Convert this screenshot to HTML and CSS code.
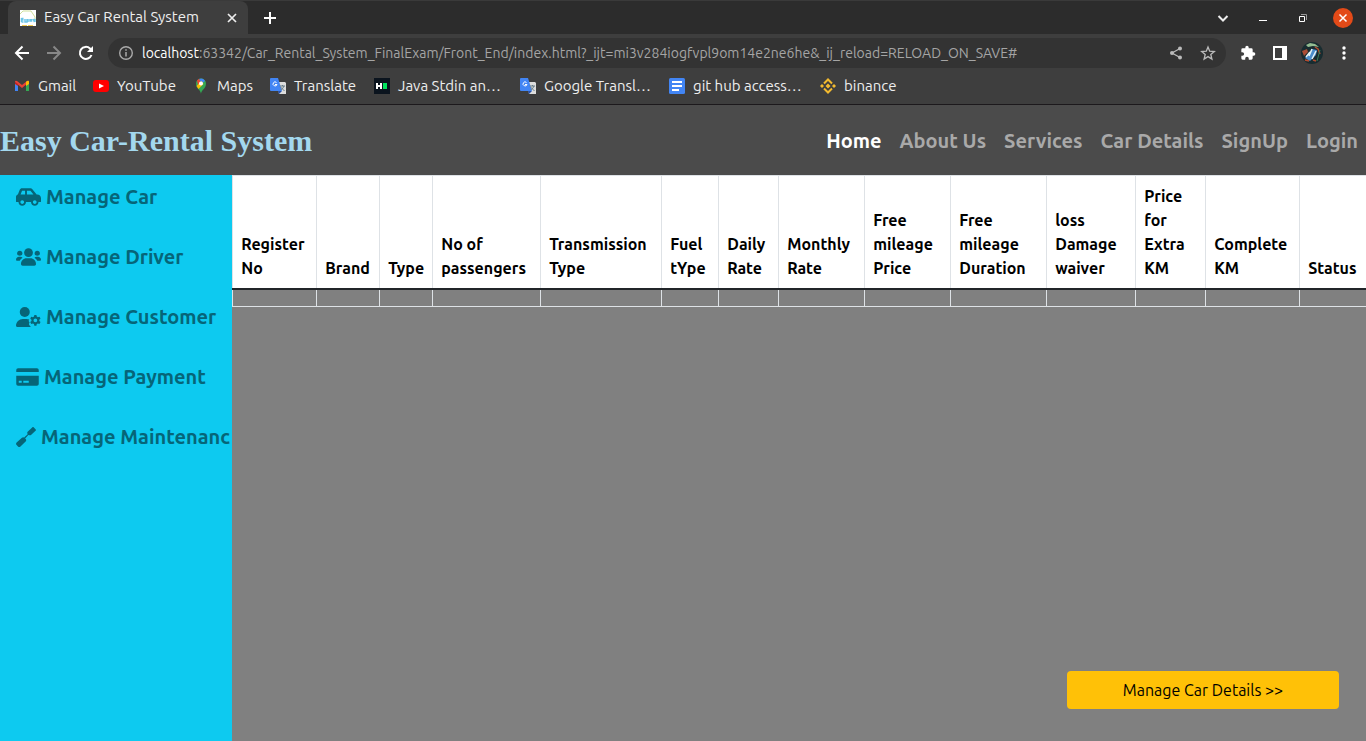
FILE: index.html
```html
<!DOCTYPE html>
<html lang="en">
<head>
<meta charset="utf-8">
<title>Easy Car Rental System</title>
<link rel="stylesheet" href="styles.css">
</head>
<body>
<div class="browser">
  <div class="tab-strip">
    <div class="tab">
      <svg class="icon-16" viewBox="0 0 16 16"><path fill="#fff" d="M0 0h16v16H0z"/><path d="M0 4 3 1h8l4 6v3" fill="none" stroke="#cfdf9a"/><path d="M1.500 8v4M1.500 8.500h2m-2 1.500h2m-2 2h2M5 9v3h2V9m1 0v3M10 9v2h1.500V9M13 9l1 2 1-2v3" stroke="#6cc4e6" stroke-width="1.500" fill="none"/><path d="M2 15.500h12" stroke="#f3cb4e" stroke-dasharray="5 1"/></svg>
      <span class="tab-title">Easy Car Rental System</span>
      <button class="icon-button" aria-label="Close tab"><svg class="icon-16" viewBox="0 0 16 16"><path d="m4 4 8 8m0-8-8 8" stroke="#eee" stroke-width="1.7"/></svg></button>
    </div>
    <button class="icon-button new-tab" aria-label="New tab"><svg class="icon-16" viewBox="0 0 16 16"><path d="M8 2v12M2 8h12" stroke="#fff" stroke-width="2"/></svg></button>
    <div class="window-controls">
      <button class="icon-button" aria-label="Search tabs"><svg class="icon-16" viewBox="0 0 16 16"><path d="m3.500 6 4.500 4.500L12.500 6" stroke="#eee" stroke-width="2" fill="none"/></svg></button>
      <button class="icon-button" aria-label="Minimize"><svg class="icon-16" viewBox="0 0 16 16"><path d="M4 10.500h8" stroke="#fff"/></svg></button>
      <button class="icon-button" aria-label="Restore"><svg class="icon-16" viewBox="0 0 16 16"><path d="M6 4.500h5.500V10" stroke="#999" fill="none"/><path d="M4.500 6.500h5v5h-5z" stroke="#fff" fill="none"/></svg></button>
      <button class="icon-button close-window" aria-label="Close"><svg class="icon-16" viewBox="0 0 16 16"><path d="m4.500 4.500 7 7m0-7-7 7" stroke="#fff" stroke-width="1.500"/></svg></button>
    </div>
  </div>
  <div class="toolbar">
    <div class="history">
      <button class="icon-button" aria-label="Back"><svg class="icon-16" viewBox="0 0 16 16"><path d="M15 8H2m6.500-6.500L2 8l6.500 6.500" stroke="#fff" stroke-width="2" fill="none"/></svg></button>
      <button class="icon-button" aria-label="Forward"><svg class="icon-16" viewBox="0 0 16 16"><path d="M1 8h13M7.500 1.500 14 8l-6.500 6.500" stroke="#888" stroke-width="2" fill="none"/></svg></button>
      <button class="icon-button" aria-label="Reload"><svg class="icon-16" viewBox="0 0 16 16"><path d="M13.500 10A6 6 0 1 1 12 3.500L14 6" stroke="#fff" stroke-width="2" fill="none"/><path fill="#fff" d="M15 1v6H9z"/></svg></button>
    </div>
    <div class="address">
      <svg class="icon-16" viewBox="0 0 16 16"><circle cx="8" cy="8" r="6.300" fill="none" stroke="#aaa" stroke-width="1.400"/><path d="M8 7v4.500M8 4.200v1.600" stroke="#aaa" stroke-width="1.500"/></svg>
      <p class="url"><span class="host">localhost</span>:63342/Car_Rental_System_FinalExam/Front_End/index.html?_ijt=mi3v284iogfvpl9om14e2ne6he&amp;_ij_reload=RELOAD_ON_SAVE#</p>
      <button class="icon-button" aria-label="Share"><svg class="icon-16" viewBox="0 0 16 16"><path d="M12 3.500 4 8l8 4.500" stroke="#bbb" stroke-width="1.300" fill="none"/><g fill="#bbb"><circle cx="12" cy="3.500" r="2"/><circle cx="4" cy="8" r="2"/><circle cx="12" cy="12.500" r="2"/></g></svg></button>
      <button class="icon-button" aria-label="Bookmark"><svg class="icon-16" viewBox="0 0 16 16"><path d="m8 2 1.700 4.200 4.600.3-3.500 3 1.100 4.500L8 11.600 4.100 14l1.100-4.500-3.500-3 4.600-.3z" stroke="#bbb" stroke-width="1.300" fill="none"/></svg></button>
    </div>
    <div class="extensions">
      <button class="icon-button" aria-label="Extensions"><svg class="icon-16" viewBox="0 0 24 24"><path fill="#fff" d="M20.500 11H19V7a2 2 0 0 0-2-2h-4V3.500a2.500 2.500 0 0 0-5 0V5H4a2 2 0 0 0-2 2v3.800h1.500a2.700 2.700 0 0 1 0 5.400H2V20a2 2 0 0 0 2 2h3.800v-1.500a2.700 2.700 0 0 1 5.400 0V22H17a2 2 0 0 0 2-2v-4h1.500a2.500 2.500 0 0 0 0-5z"/></svg></button>
      <button class="icon-button" aria-label="Side panel"><svg class="icon-16" viewBox="0 0 16 16"><path fill="#fff" fill-rule="evenodd" d="M1 1h14v14H1zM3 3v10h7V3z"/></svg></button>
      <button class="icon-button" aria-label="Profile"><svg class="avatar" viewBox="0 0 22 22"><circle cx="11" cy="11" r="11" fill="#182c30"/><path d="m5 3 4-2 5 1 4 3-6-1-5 1z" fill="#94bd91"/><path d="m1 9 5-2 1 3-4 4z" fill="#a94d35"/><path d="m4 16 7-9 5 1-1 5-6 6z" fill="#4b8dcb"/><path d="m8 14 3-7M11 17l4-8M5 15l4-5" stroke="#e5f3f5" stroke-width="1.500"/><path d="m14 5 3 2 2 5m-15 6 4 1m4-1 3 1" stroke="#b64c2e" stroke-width="1.500" fill="none"/><path d="m19 8-3 11" stroke="#397b57"/></svg></button>
      <button class="icon-button" aria-label="Menu"><svg class="icon-16" viewBox="0 0 16 16"><g fill="#fff"><circle cx="8" cy="3" r="1.700"/><circle cx="8" cy="8" r="1.700"/><circle cx="8" cy="13" r="1.700"/></g></svg></button>
    </div>
  </div>
  <nav class="bookmarks" aria-label="Bookmarks">
    <a class="bookmark w-gmail" href="#"><svg class="icon-16" viewBox="0 0 16 16"><path fill="#4285f4" d="M1 4v9h3V7z"/><path fill="#34a853" d="M12 7v6h3V4z"/><path fill="#ea4335" d="M1 4q0-2 2-1l5 4 5-4q2-1 2 1l-7 6z"/><path fill="#fbbc04" d="m12 4 1-1q2-1 2 1v2l-3 2z"/><path fill="#c5221f" d="m1 4 3 2v2L1 6z"/></svg>Gmail</a>
    <a class="bookmark w-youtube" href="#"><svg class="icon-16" viewBox="0 0 16 16"><rect y="2" width="16" height="12" rx="3" fill="#f00"/><path fill="#fff" d="m6 5.500 5 2.500-5 2.500z"/></svg>YouTube</a>
    <a class="bookmark w-maps" href="#"><svg class="icon-16" viewBox="0 0 16 16"><path fill="#34a853" d="M8 16C8 12 3 11 3 5.500a5 5 0 0 1 10 0C13 11 8 12 8 16z"/><path fill="#4285f4" d="M6 1a5 5 0 0 1 6 2L8 6z"/><path fill="#ea4335" d="M4 2.500 6 .8 8 5 5 7z"/><path fill="#fbbc04" d="m3.500 8 5-5 2 3-5 5z"/><circle cx="8" cy="5.500" r="2" fill="#fff"/></svg>Maps</a>
    <a class="bookmark w-translate" href="#"><svg class="icon-16" viewBox="0 0 16 16"><path fill="#ddd" d="M7 4h8l1 1v11H9z"/><path fill="#4285f4" d="M0 1q0-1 1-1h7l4 13H1q-1 0-1-1z"/><path fill="#264fa8" d="m8 13h4l-3 3z"/><path d="M6.500 4.500a2 2 0 1 0 .5 2H5" stroke="#fff" fill="none"/><path d="M9.500 8H15m-2.500-1v1m1.500 0q-1 3-3.500 4m0-3 4 4" stroke="#667c88" fill="none"/></svg>Translate</a>
    <a class="bookmark w-java" href="#"><svg class="icon-16" viewBox="0 0 16 16"><path fill="#0b141e" d="M0 0h16v16H0z"/><path d="M3 5v6m4-6v6M3 8h4" stroke="#fff" stroke-width="2"/><path fill="#00e45e" d="M9 5h4v6H9z"/></svg>Java Stdin an…</a>
    <a class="bookmark w-google" href="#"><svg class="icon-16" viewBox="0 0 16 16"><path fill="#ddd" d="M7 4h8l1 1v11H9z"/><path fill="#4285f4" d="M0 1q0-1 1-1h7l4 13H1q-1 0-1-1z"/><path fill="#264fa8" d="m8 13h4l-3 3z"/><path d="M6.500 4.500a2 2 0 1 0 .5 2H5" stroke="#fff" fill="none"/><path d="M9.500 8H15m-2.500-1v1m1.500 0q-1 3-3.500 4m0-3 4 4" stroke="#667c88" fill="none"/></svg>Google Transl…</a>
    <a class="bookmark w-git" href="#"><svg class="icon-16" viewBox="0 0 16 16"><rect width="16" height="16" rx="1.500" fill="#4285f4"/><path d="M3 4h10M3 8h10M3 12h7" stroke="#fff" stroke-width="2"/></svg>git hub access…</a>
    <a class="bookmark" href="#"><svg class="icon-16" viewBox="0 0 16 16"><g stroke="#f3ba2f" stroke-width="2" fill="none"><path d="M4 5.500 8 1.500l4 4M4 10.500l4 4 4-4"/></g><path fill="#f3ba2f" d="m8 5.500 2.500 2.500L8 10.500 5.500 8zM2 6l2 2-2 2-2-2zm12 0 2 2-2 2-2-2z"/></svg>binance</a>
  </nav>
</div>

<header class="site-header">
  <h1 class="brand">Easy Car-Rental System</h1>
  <nav class="site-nav" aria-label="Main">
    <a class="nav-link active" href="#">Home</a>
    <a class="nav-link" href="#">About Us</a>
    <a class="nav-link" href="#">Services</a>
    <a class="nav-link" href="#">Car Details</a>
    <a class="nav-link" href="#">SignUp</a>
    <a class="nav-link" href="#">Login</a>
  </nav>
</header>

<div class="page">
  <nav class="sidebar" aria-label="Management">
    <a class="side-link" href="#"><svg class="side-icon wide" viewBox="0 0 640 512"><path d="M544 192h-16L419.220 56.020A64.025 64.025 0 0 0 369.240 32H155.330c-26.170 0-49.700 15.930-59.420 40.230L48 194.260C20.440 201.400 0 226.210 0 256v112c0 8.840 7.160 16 16 16h48c0 53.020 42.980 96 96 96s96-42.980 96-96h128c0 53.020 42.980 96 96 96s96-42.980 96-96h48c8.840 0 16-7.160 16-16v-80c0-53.020-42.980-96-96-96zM160 432c-26.470 0-48-21.530-48-48s21.530-48 48-48 48 21.530 48 48-21.530 48-48 48zm72-240H116.930l38.400-96H232v96zm48 0V96h89.240l76.800 96H280zm200 240c-26.470 0-48-21.530-48-48s21.530-48 48-48 48 21.530 48 48-21.530 48-48 48z"/></svg>Manage Car</a>
    <a class="side-link" href="#"><svg class="side-icon wide" viewBox="0 0 640 512"><circle cx="320" cy="144" r="112"/><circle cx="96" cy="160" r="66"/><circle cx="544" cy="160" r="66"/><path d="M128 435c0-84 62-147 144-147h96c82 0 144 63 144 147 0 25-18 45-43 45H171c-25 0-43-20-43-45zM0 330c0-44 34-78 78-78h37c20 0 39 8 53 21-38 25-60 55-72 79H24c-14 0-24-9-24-22zM640 330c0-44-34-78-78-78h-37c-20 0-39 8-53 21 38 25 60 55 72 79h72c14 0 24-9 24-22z"/></svg>Manage Driver</a>
    <a class="side-link" href="#"><svg class="side-icon wide" viewBox="0 0 640 512"><circle cx="224" cy="128" r="128"/><path d="M0 482c0-99 79-178 178-178h92c25 0 49 5 70 15-13 24-20 30-10 52l18 29c-28 27-17 42-4 64 14 24 27 28 42 48H30c-17 0-30-13-30-30z"/><path fill-rule="evenodd" d="M470 202h52l10 43 27 15 42-13 27 46-32 31v32l32 31-27 46-42-13-27 15-10 43h-52l-10-43-27-15-42 13-27-46 32-31v-32l-32-31 27-46 42 13 27-15zM496 292a48 48 0 1 0 0 96 48 48 0 0 0 0-96z"/></svg>Manage Customer</a>
    <a class="side-link" href="#"><svg class="side-icon card" viewBox="0 0 576 512"><path fill-rule="evenodd" d="M0 128V82c0-28 20-50 48-50h480c28 0 48 22 48 50v46zM0 224h576v206c0 28-20 50-48 50H48c-28 0-48-22-48-50zM64 352v48h76v-48zm116 0v48h140v-48z"/></svg>Manage Payment</a>
    <a class="side-link" href="#"><svg class="side-icon" viewBox="0 0 512 512"><path d="M415 12c12-12 24-15 36-5l54 54c10 12 7 24-5 36L384 204c-12 12-25 12-38 8l-30-8-82 90-26-26 90-82-8-26c-4-14-4-26 8-38zM152 276c22-20 45-20 64 0l30 30c20 20 20 43 0 64L115 496c-22 20-43 20-64 0l-35-35c-20-20-20-43 0-64z"/></svg>Manage Maintenanc</a>
  </nav>
  <main class="content">
    <table class="cars">
      <colgroup><col class="c84"><col class="c63"><col class="c53"><col class="c108"><col class="c121"><col class="c57"><col class="c60"><col class="c86"><col class="c86"><col class="c96"><col class="c89"><col class="c70"><col class="c94"><col class="c67"></colgroup>
      <thead><tr><th>Register<br>No</th><th>Brand</th><th>Type</th><th>No of<br>passengers</th><th>Transmission<br>Type</th><th>Fuel<br>tYpe</th><th>Daily<br>Rate</th><th>Monthly<br>Rate</th><th>Free<br>mileage<br>Price</th><th>Free<br>mileage<br>Duration</th><th>loss<br>Damage<br>waiver</th><th>Price<br>for<br>Extra<br>KM</th><th>Complete<br>KM</th><th>Status</th></tr></thead>
      <tbody><tr><td></td><td></td><td></td><td></td><td></td><td></td><td></td><td></td><td></td><td></td><td></td><td></td><td></td><td></td></tr></tbody>
    </table>
    <button class="details-button">Manage Car Details &gt;&gt;</button>
  </main>
</div>
</body>
</html>
```
FILE: styles.css
```css
* { box-sizing: border-box; }
body {
  margin: 0;
  min-height: 100vh;
  display: flex;
  flex-direction: column;
  font-family: Ubuntu, "Noto Sans", sans-serif;
  font-size: 16px;
  line-height: 24px;
}
a { color: inherit; text-decoration: none; }
svg { display: block; flex: none; }
.icon-button {
  display: flex;
  align-items: center;
  justify-content: center;
  padding: 0;
  border: 0;
  background: none;
}
.icon-16 { width: 16px; height: 16px; }

/* Browser frame */
.browser {
  background: #3e3e3e;
  color: #eee;
  font-size: 15px;
  line-height: 20px;
  border-bottom: 1px solid #1c191c;
}
.tab-strip {
  display: flex;
  align-items: center;
  height: 34px;
  padding: 0 13px 0 8px;
  background: #2c2c2c;
  border-top: 1px solid #3a3a3a;
}
.tab {
  display: flex;
  align-items: center;
  gap: 8px;
  width: 240px;
  height: 100%;
  padding: 0 8px 0 12px;
  background: #3e3e3e;
  border-radius: 8px 8px 0 0;
}
.tab-title {
  flex: 1;
  padding-bottom: 2px;
  white-space: nowrap;
}
.new-tab { margin-left: 14px; }
.window-controls {
  display: flex;
  align-items: center;
  gap: 20px;
  margin-left: auto;
}
.window-controls .icon-button { width: 20px; height: 20px; }
.close-window {
  border-radius: 50%;
  background: #e34a18;
}
.toolbar {
  display: flex;
  align-items: center;
  height: 38px;
  padding: 0 14px;
}
.history { display: flex; gap: 16px; margin-right: 14px; }
.address {
  flex: 1;
  display: flex;
  align-items: center;
  height: 30px;
  padding: 0 10px;
  gap: 16px;
  border-radius: 15px;
  background: #333;
}
.url {
  flex: 1;
  margin: 0 0 0 -8px;
  white-space: nowrap;
  color: #a5a5a5;
  font-size: 14px;
}
.host { color: #fff; }
.extensions {
  display: flex;
  align-items: center;
  gap: 16px;
  margin-left: 14px;
}
.extensions .icon-button:nth-child(3) { margin: 0 -3px; }
.avatar { width: 22px; height: 22px; }
.bookmarks {
  display: flex;
  height: 32px;
  padding: 0 14px 4px;
}
.bookmark {
  display: flex;
  align-items: center;
  gap: 8px;
  white-space: nowrap;
}
.w-gmail { width: 79px; }
.w-youtube { width: 100px; }
.w-maps { width: 77px; }
.w-translate { width: 104px; }
.w-java { width: 146px; }
.w-google { width: 149px; }
.w-git { width: 151px; }

/* Site header */
.site-header {
  display: flex;
  align-items: center;
  justify-content: space-between;
  height: 70px;
  padding-top: 2px;
  background: #4b4b4b;
}
.brand {
  margin: 0;
  color: #a3d8ee;
  font: bold 30px/36px "Liberation Serif", serif;
}
.site-nav {
  display: flex;
  gap: 18px;
  padding-right: 8px;
}
.nav-link {
  color: #a9a9a9;
  font-size: 20px;
  font-weight: 700;
  line-height: 30px;
  white-space: nowrap;
}
.nav-link.active { color: #fff; }

/* Page body */
.page { flex: 1; display: flex; }
.sidebar {
  flex: none;
  width: 17%;
  padding: 7px 0 0 16px;
  display: flex;
  flex-direction: column;
  gap: 30px;
  overflow: hidden;
  background: #0dcaf0;
}
.side-link {
  display: flex;
  align-items: center;
  gap: 5px;
  color: #066578;
  font-size: 20px;
  font-weight: 700;
  line-height: 30px;
  white-space: nowrap;
}
.side-icon { width: 20px; height: 20px; fill: currentColor; }
.side-icon.wide { width: 25px; }
.side-icon.card { width: 23px; }
.content {
  flex: 1;
  min-width: 0;
  display: flex;
  flex-direction: column;
  justify-content: space-between;
  background: #808080;
}
.cars {
  width: 100%;
  table-layout: fixed;
  border-collapse: collapse;
}
.cars th, .cars td {
  padding: 8px;
  border: 1px solid #dee2e6;
}
.cars th {
  background: #fff;
  color: #000;
  font-weight: 700;
  text-align: left;
  vertical-align: bottom;
  white-space: nowrap;
}
.cars thead th { border-bottom: 2px solid #212529; }
.c53 { width: 53px; }
.c57 { width: 57px; }
.c60 { width: 60px; }
.c63 { width: 63px; }
.c67 { width: 67px; }
.c70 { width: 70px; }
.c84 { width: 84px; }
.c86 { width: 86px; }
.c89 { width: 89px; }
.c94 { width: 94px; }
.c96 { width: 96px; }
.c108 { width: 108px; }
.c121 { width: 121px; }
.details-button {
  align-self: flex-end;
  width: 24%;
  margin: 0 27px 32px 0;
  padding: 7px 12px;
  border: 0;
  border-radius: 4px;
  background: #ffc107;
  color: #000;
  font: inherit;
}
```
